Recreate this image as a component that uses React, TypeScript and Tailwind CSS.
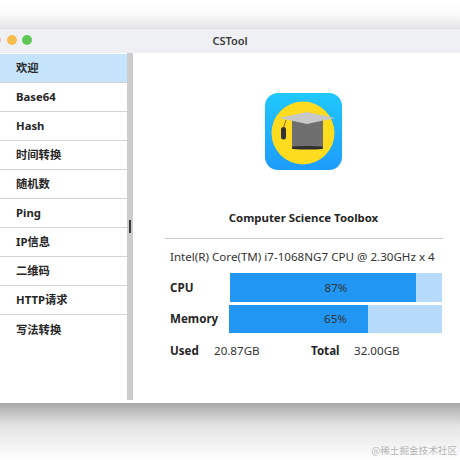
const items = ["欢迎", "Base64", "Hash", "时间转换", "随机数", "Ping", "IP信息", "二维码", "HTTP请求", "写法转换"];

function Logo() {
  return (
    <svg width="77" height="77" viewBox="0 0 77 77" className="block">
      <defs>
        <linearGradient id="bg" x1="0" y1="0" x2="0" y2="1">
          <stop offset="0" stopColor="#20c8fb" />
          <stop offset="1" stopColor="#1e9bfb" />
        </linearGradient>
      </defs>
      <rect width="77" height="77" rx="13" fill="url(#bg)" />
      <circle cx="38" cy="40" r="31.5" fill="#fddb1f" />
      <path d="M27 27 L58 27 L58 56 L27 56 Z" fill="#6e6e6e" />
      <path d="M27 53.5 Q42.5 52.5 58 53.5 L57.5 56 Q42.5 57 27.5 56 Z" fill="#2e2e2e" />
      <path d="M14 25 L42 19 L70 25 L42 31 Z" fill="#c8c8c8" />
      <path d="M21 27 L18.5 35" stroke="#8a6f1c" strokeWidth="1" fill="none" />
      <rect x="16" y="34" width="5" height="12.5" rx="2.5" fill="#33322e" />
    </svg>
  );
}

export default function App() {
  return (
    <div className="w-[460px] h-[460px] overflow-hidden bg-white flex flex-col font-['Noto_Sans','Noto_Sans_CJK_SC',sans-serif] text-[#262626]">
      <div className="h-[28px] shrink-0 bg-gradient-to-b from-white via-[#fafafa] to-[#e6e6e6]" />
      <div className="relative h-[25px] shrink-0 bg-[#eff0f4] border-t border-[#e0e0e0] flex items-center justify-center">
        <span className="text-[11px] font-semibold text-[#3a3a3a]">CSTool</span>
        <div className="absolute left-[-9px] top-[5.5px] flex gap-[5.5px]">
          <span className="w-[10px] h-[10px] rounded-full bg-[#f6bcb8]" />
          <span className="w-[10px] h-[10px] rounded-full bg-[#f6bd4f]" />
          <span className="w-[10px] h-[10px] rounded-full bg-[#5fc855]" />
        </div>
      </div>
      <div className="h-[350px] shrink-0 flex">
        <div className="w-[127px] shrink-0 pt-[1px]">
          {items.map((t, i) => (
            <div
              key={t}
              className={`h-[29px] pl-4 pt-[1px] flex items-center text-[11.3px] font-bold ${i < 9 ? "border-b border-[#d4d4d4]" : ""} ${i === 0 ? "bg-[#c5e3fb]" : "bg-white"}`}
            >
              {t}
            </div>
          ))}
        </div>
        <div className="relative w-[6px] h-[347px] shrink-0 bg-[#cccccc]">
          <div className="absolute left-[2px] top-[167px] w-[2px] h-[13px] bg-[#3c3c3c]" />
        </div>
        <div className="flex-1 flex flex-col items-center pt-[40px] pl-[14px]">
          <Logo />
          <div className="mt-[39px] h-[18px] flex items-center text-[11.4px] font-bold">Computer Science Toolbox</div>
          <div className="mt-[11px] w-[278px] h-px bg-[#c8c8c8]" />
          <div className="self-stretch pl-[23px] pr-[18px]">
            <div className="mt-[9px] h-[18px] flex items-center text-[11.6px] whitespace-nowrap text-[#333333]">Intel(R) Core(TM) i7-1068NG7 CPU @ 2.30GHz x 4</div>
            <div className="mt-[7px] h-[29px] flex items-center">
              <span className="w-[60px] text-[11.6px] font-bold">CPU</span>
              <div className="w-[212px] h-full bg-[#b5dafa] relative">
                <div className="h-full w-[186px] bg-[#2196f3]" />
                <span className="absolute inset-0 flex items-center justify-center text-[11.6px] text-[#333333]">87%</span>
              </div>
            </div>
            <div className="mt-[3px] h-[28px] flex items-center">
              <span className="w-[59px] text-[11.6px] font-bold">Memory</span>
              <div className="w-[213px] h-full bg-[#b5dafa] relative">
                <div className="h-full w-[139px] bg-[#2196f3]" />
                <span className="absolute inset-0 flex items-center justify-center text-[11.6px] text-[#333333]">65%</span>
              </div>
            </div>
            <div className="mt-[9px] h-[18px] flex items-center text-[11.6px]">
              <span className="w-[44px] font-bold">Used</span>
              <span className="w-[97px] text-[#333333]">20.87GB</span>
              <span className="w-[43px] font-bold">Total</span>
              <span className="text-[#333333]">32.00GB</span>
            </div>
          </div>
        </div>
      </div>
      <div className="relative flex-1 bg-gradient-to-b from-[#a9a9a9] via-[#e4e4e4] via-40% to-white">
        <span className="absolute right-[3px] bottom-[3px] text-[9.6px] leading-[14px] text-[#b4b4b4] font-['Noto_Sans_CJK_SC',sans-serif]">@稀土掘金技术社区</span>
      </div>
    </div>
  );
}
